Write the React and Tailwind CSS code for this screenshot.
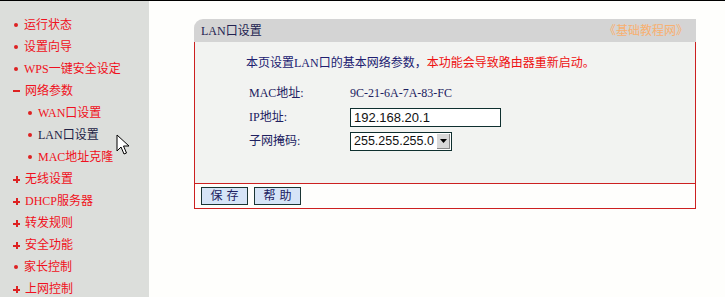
import React from 'react';

const menu = [
  { label: '运行状态', mark: 'dot' },
  { label: '设置向导', mark: 'dot' },
  { label: 'WPS一键安全设定', mark: 'dot' },
  { label: '网络参数', mark: 'minus' },
  { label: 'WAN口设置', mark: 'dot', sub: true },
  { label: 'LAN口设置', mark: 'dot', sub: true, active: true },
  { label: 'MAC地址克隆', mark: 'dot', sub: true },
  { label: '无线设置', mark: 'plus' },
  { label: 'DHCP服务器', mark: 'plus' },
  { label: '转发规则', mark: 'plus' },
  { label: '安全功能', mark: 'plus' },
  { label: '家长控制', mark: 'dot' },
  { label: '上网控制', mark: 'plus' },
];

function Mark({ type }) {
  if (type === 'plus') {
    return (
      <span className="relative w-[7px] h-[7px] shrink-0">
        <span className="absolute left-0 top-[3px] w-[7px] h-[2px] bg-[#dd2222]" />
        <span className="absolute left-[3px] top-0 w-[2px] h-[7px] bg-[#dd2222]" />
      </span>
    );
  }
  if (type === 'minus') {
    return <span className="w-[7px] h-[2px] bg-[#dd2222] shrink-0" />;
  }
  return <span className="w-[4px] h-[4px] rounded-full bg-[#dd2222] mx-[1px] shrink-0" />;
}

function Sidebar() {
  return (
    <div className="w-[149px] shrink-0 bg-[#dcdedb] pt-[13px] relative">
      {menu.map((m) => (
        <div
          key={m.label}
          className={`h-[22px] flex items-center gap-[5px] ${m.sub ? 'pl-[27px]' : 'pl-[13px]'}`}
        >
          <Mark type={m.mark} />
          <span className={m.active ? 'text-[#222244]' : 'text-[#f01020]'}>{m.label}</span>
        </div>
      ))}
      <svg className="absolute left-[116px] top-[133px]" width="14" height="22" viewBox="0 0 14 22">
        <path d="M1 1 L1 17 L5 13 L8 20 L10.5 19 L7.5 12 L13 12 Z" fill="#fff" stroke="#000" strokeWidth="1" strokeLinejoin="miter" />
      </svg>
    </div>
  );
}

export default function App() {
  return (
    <div
      className="w-[725px] h-[297px] overflow-hidden bg-[#fefefc] border-t border-black flex text-[12px] leading-none"
      style={{ fontFamily: '"Liberation Serif", "Noto Sans CJK SC", serif' }}
    >
      <Sidebar />
      <div className="pl-[45px] pt-[18px]">
        <div className="w-[502px]">
          <div className="h-[23px] bg-[#d4d4d4] rounded-tl-[9px] flex items-center justify-between pl-[7px] pr-[8px]">
            <span className="text-[#222250]">LAN口设置</span>
            <span className="text-[#f8b070]">《基础教程网》</span>
          </div>
          <div className="border-x border-[#cc2020] bg-[#f2f3f1] h-[141px] pt-[14px]">
            <div className="pl-[51px] h-[13px] flex items-center">
              <span className="text-[#202070]">本页设置LAN口的基本网络参数，</span>
              <span className="text-[#ee1111]">本功能会导致路由器重新启动。</span>
            </div>
            <div className="pl-[54px] mt-[12px] text-[#202060]">
              <div className="h-[24px] flex items-center">
                <span className="w-[101px]">MAC地址:</span>
                <span>9C-21-6A-7A-83-FC</span>
              </div>
              <div className="h-[24px] flex items-center">
                <span className="w-[101px]">IP地址:</span>
                <div
                  className="w-[151px] h-[19px] bg-white border border-[#0f2f2f] flex items-center pl-[3px] text-[13px] text-[#111]"
                  style={{ fontFamily: '"Liberation Sans", sans-serif' }}
                >
                  192.168.20.1
                </div>
              </div>
              <div className="h-[24px] flex items-center">
                <span className="w-[101px]">子网掩码:</span>
                <div
                  className="w-[102px] h-[19px] bg-white border border-[#0f2f2f] flex items-center text-[12.5px] text-[#111]"
                  style={{ fontFamily: '"Liberation Sans", sans-serif' }}
                >
                  <span className="pl-[3px] flex-1 whitespace-nowrap">255.255.255.0</span>
                  <span className="w-[13px] h-[15px] mr-[1px] bg-[#d8d8d8] border-r border-b border-[#888] flex items-center justify-center shrink-0">
                    <svg width="7" height="4" viewBox="0 0 7 4">
                      <path d="M0 0 L7 0 L3.5 4 Z" fill="#000" />
                    </svg>
                  </span>
                </div>
              </div>
            </div>
          </div>
          <div className="border border-[#cc2020] h-[26px] flex items-center gap-[6px] pl-[6px]">
            <button className="w-[47px] h-[18px] bg-[#d6e4f7] border border-[#1a3434] text-[#202060] tracking-[4px] pl-[4px]">
              保存
            </button>
            <button className="w-[47px] h-[18px] bg-[#d6e4f7] border border-[#1a3434] text-[#202060] tracking-[4px] pl-[4px]">
              帮助
            </button>
          </div>
        </div>
      </div>
    </div>
  );
}
